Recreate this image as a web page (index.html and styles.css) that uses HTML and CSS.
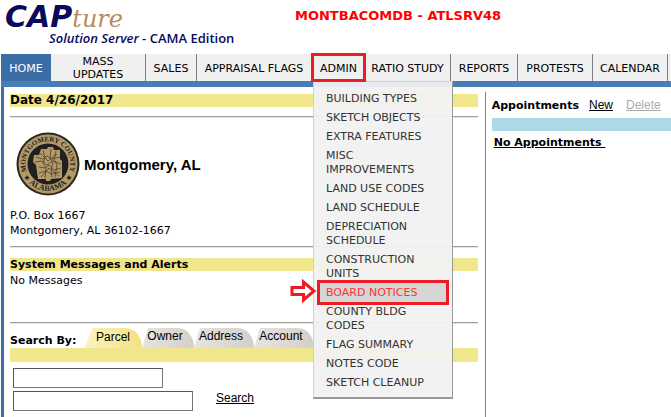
FILE: index.html
```html
<!DOCTYPE html>
<html lang="en">

<head>
    <meta charset="UTF-8">
    <meta name="viewport" content="width=device-width, initial-scale=1.0">
    <title>CAPture Solution Server - CAMA Edition</title>
    <link rel="stylesheet" href="styles.css">
</head>

<body>
    <header class="header">
        <div class="logo">
            <div class="logo-name"><span class="logo-cap">CAP</span><span class="logo-ture">ture</span></div>
            <div class="logo-sub"><em>Solution Server</em> - CAMA Edition</div>
        </div>
        <div class="server-name">MONTBACOMDB - ATLSRV48</div>
    </header>

    <nav class="nav">
        <ul class="nav-list">
            <li class="nav-item nav-home"><a href="#">HOME</a></li>
            <li class="nav-item nav-mass"><a href="#">MASS UPDATES</a></li>
            <li class="nav-item nav-sales"><a href="#">SALES</a></li>
            <li class="nav-item nav-flags"><a href="#">APPRAISAL FLAGS</a></li>
            <li class="nav-item nav-admin">
                <a href="#">ADMIN</a>
                <ul class="submenu">
                    <li><a href="#">BUILDING TYPES</a></li>
                    <li><a href="#">SKETCH OBJECTS</a></li>
                    <li><a href="#">EXTRA FEATURES</a></li>
                    <li><a href="#">MISC IMPROVEMENTS</a></li>
                    <li><a href="#">LAND USE CODES</a></li>
                    <li><a href="#">LAND SCHEDULE</a></li>
                    <li><a href="#">DEPRECIATION SCHEDULE</a></li>
                    <li><a href="#">CONSTRUCTION UNITS</a></li>
                    <li class="active">
                        <svg class="arrow" width="27" height="24" viewBox="0 0 27 24">
                            <path d="M2 8.500H13.500V3L24 12L13.500 21V15.500H2Z" fill="#fff" stroke="#ed1c24" stroke-width="3" />
                        </svg>
                        <a href="#">BOARD NOTICES</a>
                    </li>
                    <li><a href="#">COUNTY BLDG CODES</a></li>
                    <li><a href="#">FLAG SUMMARY</a></li>
                    <li><a href="#">NOTES CODE</a></li>
                    <li><a href="#">SKETCH CLEANUP</a></li>
                </ul>
            </li>
            <li class="nav-item nav-ratio"><a href="#">RATIO STUDY</a></li>
            <li class="nav-item nav-reports"><a href="#">REPORTS</a></li>
            <li class="nav-item nav-protests"><a href="#">PROTESTS</a></li>
            <li class="nav-item nav-calendar"><a href="#">CALENDAR</a></li>
        </ul>
    </nav>

    <main class="main">
        <div class="left">
            <h2 class="bar date">Date 4/26/2017</h2>
            <section class="county">
                <div class="county-title">
                    <svg class="seal" width="64" height="64" viewBox="0 0 64 64">
                        <defs>
                            <path id="ring-top" d="M12.500 43A22.500 22.500 0 1 1 51.500 43" />
                            <path id="ring-bottom" d="M9 46A27 27 0 0 0 55 46" />
                        </defs>
                        <circle cx="32" cy="32" r="31.500" fill="#2b2722" />
                        <circle cx="32" cy="32" r="29.500" fill="#b39a67" />
                        <circle cx="32" cy="32" r="20.500" fill="#211f20" />
                        <path d="M25 17h6l1-2h5l1 3h6v9l2 2v17l-11 1-1 2h-4v-2h-8l-2-14-3-3 1-7h5z" fill="#b39a67" />
                        <path d="M20 25l7 2 4-3 5 3 8-2M19 30l7-1 5 4 6-4 8 3M23 35l6 1 4-3 5 5 7-2M23 41l7-2 5 3 9-2M27 18l2 8-2 5 3 5-1 10M35 17l-1 9 3 5-2 8 1 6M40 19l-2 8 3 6-2 12M24 21l8 8 9-7M25 45l8-9 10 8" fill="none" stroke="#4a4030" stroke-width="0.8" />
                        <path id="star" d="M11 43l.8 1.700 1.800.2-1.300 1.300.3 1.800-1.600-.9-1.600.9.300-1.800-1.300-1.300 1.800-.2z" fill="#211f20" />
                        <use href="#star" x="42" />
                        <text class="seal-text"><textPath href="#ring-top" startOffset="50%" text-anchor="middle">MONTGOMERY COUNTY</textPath></text>
                        <text class="seal-text seal-state"><textPath href="#ring-bottom" startOffset="50%" text-anchor="middle">ALABAMA</textPath></text>
                    </svg>
                    <h1>Montgomery, AL</h1>
                </div>
                <p>P.O. Box 1667<br>Montgomery, AL 36102-1667</p>
            </section>
            <section class="messages">
                <h2 class="bar">System Messages and Alerts</h2>
                <p>No Messages</p>
            </section>
            <form class="search">
                <div class="tabs">
                    <span class="tabs-label">Search By:</span>
                    <button type="button" class="tab selected">Parcel</button>
                    <button type="button" class="tab">Owner</button>
                    <button type="button" class="tab tab-wide">Address</button>
                    <button type="button" class="tab tab-wide">Account</button>
                </div>
                <div class="tabs-bar"></div>
                <div class="fields">
                    <input type="text" class="field-short" aria-label="Parcel number">
                    <div class="field-row">
                        <input type="text" class="field-long" aria-label="Parcel">
                        <a href="#">Search</a>
                    </div>
                </div>
            </form>
        </div>

        <aside class="right">
            <div class="appointments">
                <h2>Appointments</h2>
                <a href="#">New</a>
                <a href="#" class="disabled">Delete</a>
            </div>
            <div class="right-bar"></div>
            <a href="#" class="no-appointments">No Appointments&nbsp;</a>
        </aside>
    </main>
</body>

</html>
```

FILE: styles.css
```css
* {
    box-sizing: border-box;
}

body {
    margin: 0;
    padding-left: 1px;
    min-height: 100vh;
    display: flex;
    flex-direction: column;
    overflow: hidden;
    background: #fff;
    color: #000;
    font-family: Verdana, "DejaVu Sans", sans-serif;
    font-size: 11px;
    line-height: 15px;
}

h1, h2, p, ul {
    margin: 0;
    padding: 0;
}

h2 {
    font-size: 11px;
}

ul {
    list-style: none;
}

a {
    color: inherit;
}

/* Header */
.header {
    display: flex;
    height: 54px;
}

.logo {
    width: 294px;
    padding: 3px 0 0 4px;
    color: #0a0a5c;
}

.logo-name {
    display: flex;
    align-items: baseline;
    height: 27px;
    line-height: 27px;
}

.logo-cap {
    font-size: 30px;
    font-weight: bold;
    font-style: italic;
}

.logo-ture {
    color: #b98a5e;
    font-family: "DejaVu Serif", serif;
    font-size: 24px;
    font-style: italic;
}

.logo-sub {
    padding: 1px 0 0 44px;
    font-family: "Open Sans", sans-serif;
    font-size: 13px;
    font-weight: 600;
}

.server-name {
    padding-top: 8px;
    color: #f00;
    font-size: 13px;
    font-weight: bold;
}

/* Navigation */
.nav {
    background: #f0f0f0;
    border-bottom: 6px solid #487db5;
}

.nav-list {
    display: flex;
    height: 27px;
}

.nav-item {
    flex: none;
    position: relative;
    border-right: 1px solid #808080;
    line-height: 13px;
    text-align: center;
}

.nav-item > a {
    display: flex;
    align-items: center;
    justify-content: center;
    height: 100%;
    padding-top: 1px;
    text-decoration: none;
}

.nav-home {
    width: 50px;
    border-right: 0;
    background: #3b6ea5;
    color: #fff;
}

.nav-mass {
    width: 95px;
}

.nav-mass > a {
    padding: 0 16px;
}

.nav-sales {
    width: 51px;
}

.nav-flags {
    width: 115px;
}

.nav-admin {
    width: 53px;
    border-right: 0;
}

.nav-admin > a {
    outline: 3px solid #ed1c24;
    outline-offset: -2px;
    position: relative;
    z-index: 3;
}

.nav-ratio {
    width: 86px;
}

.nav-reports {
    width: 67px;
}

.nav-protests,
.nav-calendar {
    width: 75px;
}

.submenu {
    position: absolute;
    top: 27px;
    left: 1px;
    z-index: 2;
    width: 140px;
    padding: 7px 0 5px;
    border: 1px solid #d0d0d0;
    border-right-color: #999;
    border-bottom: 2px solid #999;
    background: rgba(241, 241, 241, 0.94);
    color: #333;
    line-height: 14px;
    text-align: left;
}

.submenu li {
    position: relative;
    padding: 0 6px;
}

.submenu a {
    display: block;
    padding: 3px 14px 2px 6px;
    text-decoration: none;
}

.submenu .active a {
    background: #d6d6d6;
    color: #f33;
    outline: 3px solid #ed1c24;
}

.arrow {
    position: absolute;
    top: -4px;
    right: 135px;
}

/* Page content */
.main {
    flex: 1;
    display: grid;
    grid-template-columns: 13fr 5fr;
    padding-top: 5px;
    border-left: 3px solid #3b6ea5;
}

.left {
    padding: 2px 7px 0 6px;
    border-right: 1px solid #808080;
}

.bar {
    height: 13px;
    background: #f0e68c;
    line-height: 13px;
}

.date {
    font-size: 12px;
}

.county,
.messages,
.search {
    border-top: 1px solid #a0a0a0;
    box-shadow: inset 0 1px #e3e3e3;
}

.county {
    height: 130px;
    margin-top: 9px;
    padding-top: 15px;
}

.county-title {
    display: flex;
    align-items: center;
    gap: 4px;
    margin-bottom: 12px;
    padding-left: 6px;
}

.county-title h1 {
    font-family: "Liberation Sans", Arial, sans-serif;
    font-size: 15px;
}

.seal-text {
    fill: #211f20;
    font-family: "Liberation Serif", serif;
    font-size: 7px;
    font-weight: bold;
}

.seal-state {
    font-size: 8px;
}

.messages {
    height: 76px;
    padding-top: 11px;
}

.messages p {
    padding-top: 2px;
}

.tabs {
    display: flex;
    height: 25px;
    padding-top: 5px;
}

.tabs-label {
    width: 74px;
    padding-top: 5px;
    font-weight: bold;
}

.tab {
    width: 52px;
    padding: 0 6px 4px 0;
    border: 0;
    border-top-right-radius: 16px 20px;
    background: linear-gradient(to right, #e6e4e0, #d3d0ca);
    clip-path: polygon(6px 0, 100% 0, 100% 100%, 0 100%);
    color: #000;
    font-family: "Liberation Sans", Arial, sans-serif;
    font-size: 12px;
}

.tab.selected {
    width: 58px;
    padding: 0 0 2px;
    background: linear-gradient(to right, #fcf3c0, #f3e284);
    clip-path: polygon(9px 0, 100% 0, 100% 100%, 0 100%);
}

.tab-wide {
    width: 60px;
}

.tabs-bar {
    height: 14px;
    background: #f0e68c;
}

.fields {
    display: flex;
    flex-direction: column;
    gap: 3px;
    padding: 6px 3px;
    font-family: "Liberation Sans", Arial, sans-serif;
    font-size: 12px;
}

.fields input {
    height: 20px;
    padding: 1px 3px;
    border: 1px solid #777;
    border-top-color: #555;
    border-left-color: #555;
    font: inherit;
}

.field-short {
    width: 150px;
}

.field-long {
    width: 180px;
}

.field-row {
    display: flex;
    gap: 23px;
}

/* Appointments */
.right {
    padding: 6px 0 0 6px;
}

.appointments {
    display: flex;
    gap: 10px;
    height: 20px;
}

.appointments a {
    margin-right: 3px;
    font-family: "Liberation Sans", Arial, sans-serif;
    font-size: 12px;
}

.appointments .disabled {
    color: #aaa;
}

.right-bar {
    height: 13px;
    background: #add8e6;
}

.no-appointments {
    display: inline-block;
    padding: 4px 0 0 2px;
    font-weight: bold;
}
```
